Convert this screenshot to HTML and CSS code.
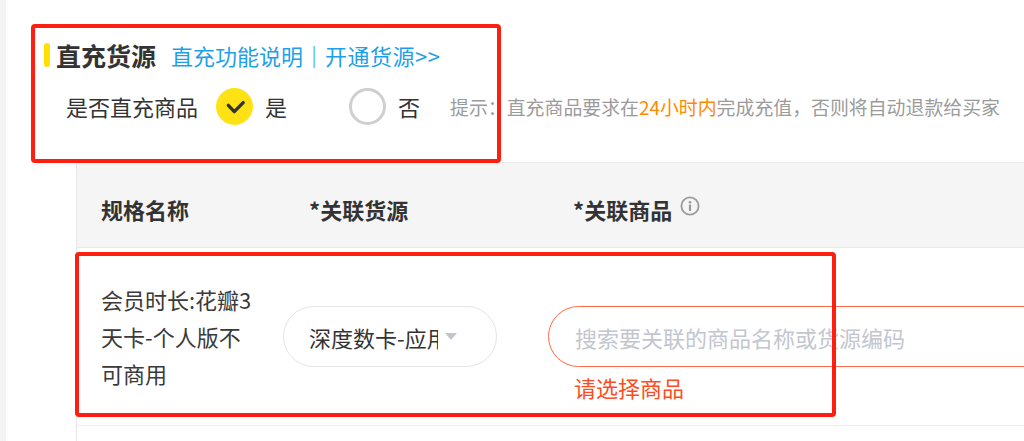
FILE: index.html
```html
<!DOCTYPE html>
<html lang="zh-CN">
<head>
<meta charset="utf-8">
<title>直充货源</title>
<link rel="stylesheet" href="styles.css">
</head>
<body>
<div class="page">
  <aside class="side"></aside>
  <main class="main">
    <div class="section-title">
      <span class="bar"></span>
      <h2 class="title">直充货源</h2>
      <a class="link">直充功能说明</a><span class="sep">｜</span><a class="link">开通货源&gt;&gt;</a>
    </div>
    <div class="form-row">
      <span class="label">是否直充商品</span>
      <label class="radio radio-yes">
        <svg class="radio-icon" viewBox="0 0 37 37" width="37" height="37">
          <circle cx="18.5" cy="18.5" r="18.5" fill="#ffe213"/>
          <path d="M12.3 17.4 L18.3 23.6 L27.2 14.6" fill="none" stroke="#333" stroke-width="3.4" stroke-linecap="round" stroke-linejoin="round"/>
        </svg>
        <span>是</span>
      </label>
      <label class="radio radio-no">
        <span class="radio-empty"></span>
        <span>否</span>
      </label>
      <span class="hint">提示：直充商品要求在<em>24小时内</em>完成充值，否则将自动退款给买家</span>
    </div>
    <div class="table">
      <div class="thead">
        <div class="th c1">规格名称</div>
        <div class="th c2">*关联货源</div>
        <div class="th c3">*关联商品
          <svg class="info" viewBox="0 0 20 20" width="20" height="20">
            <circle cx="10" cy="10" r="8.6" fill="none" stroke="#9a9a9a" stroke-width="1.8"/>
            <circle cx="10" cy="6.2" r="1.3" fill="#9a9a9a"/>
            <rect x="8.9" y="8.6" width="2.2" height="6.4" rx="0.6" fill="#9a9a9a"/>
          </svg>
        </div>
      </div>
      <div class="tr">
        <div class="td c1"><span class="spec">会员时长:花瓣3天卡-个人版不可商用</span></div>
        <div class="td c2">
          <div class="select">
            <span class="select-text">深度数卡-应用</span>
            <span class="caret"></span>
          </div>
        </div>
        <div class="td c3">
          <div class="field">
            <input class="search" type="text" placeholder="搜索要关联的商品名称或货源编码">
            <span class="error">请选择商品</span>
          </div>
        </div>
      </div>
      <div class="tail"></div>
    </div>
  </main>
  <div class="mark mark-1"></div>
  <div class="mark mark-2"></div>
</div>
</body>
</html>
```

FILE: styles.css
```css
* { box-sizing: border-box; }
html, body {
  margin: 0;
  padding: 0;
  background: #fff;
  overflow: hidden;
}
body {
  font-family: "Noto Sans CJK SC", "Noto Sans", sans-serif;
  color: #333;
  width: 1024px;
  height: 441px;
}
.page {
  position: relative;
  display: flex;
  width: 1024px;
  height: 441px;
  overflow: hidden;
}
.side {
  width: 6px;
  flex: none;
  background: #f4f4f5;
}
.main {
  flex: 1;
  padding: 39px 0 0 38px;
  min-width: 0;
}
.section-title {
  display: flex;
  align-items: center;
  height: 32px;
}
.bar {
  width: 6px;
  height: 24px;
  border-radius: 3px;
  background: #ffe000;
  margin-right: 6px;
}
.title {
  margin: 0 15px 0 0;
  font-size: 25px;
  font-weight: 700;
  color: #333;
  line-height: 32px;
}
.link, .sep {
  font-size: 22px;
  color: #1f9fe9;
  line-height: 32px;
  text-decoration: none;
}
.link:last-child { letter-spacing: 0.5px; }
.form-row {
  display: flex;
  align-items: center;
  height: 40px;
  margin: 15px 0 0 22px;
  white-space: nowrap;
}
.label {
  font-size: 22px;
  margin-right: 18px;
}
.radio {
  display: flex;
  align-items: center;
  font-size: 22px;
  gap: 12px;
}
.radio-yes { margin-right: 62px; }
.radio-no { margin-right: 30px; gap: 12px; }
.radio-icon { display: block; }
.radio-empty {
  width: 37px;
  height: 37px;
  border-radius: 50%;
  border: 3px solid #cfcfcf;
  background: #fff;
}
.hint {
  font-size: 18.9px;
  color: #9b9b9b;
}
.hint em {
  font-style: normal;
  color: #ff8a00;
}
.table {
  margin: 36px 0 0 32px;
  width: 1100px;
  border-left: 1px solid #e8e8ea;
}
.thead {
  display: grid;
  grid-template-columns: 206px 265px 1fr;
  height: 86px;
  background: #f5f5f6;
  border-top: 1px solid #e9e9eb;
  border-bottom: 1px solid #e9e9ee;
}
.th {
  display: flex;
  align-items: center;
  padding-top: 8px;
  font-size: 22px;
  font-weight: 700;
  color: #333;
}
.th.c1 { padding-left: 24px; }
.th.c2 { padding-left: 26px; }
.th.c3 { padding-left: 25px; }
.info { margin-left: 8px; margin-top: -6px; }
.tr {
  display: grid;
  grid-template-columns: 206px 265px 1fr;
  height: 178px;
  border-bottom: 1px solid #ebedf3;
  align-items: center;
}
.td.c1 { padding-left: 24px; }
.spec {
  display: block;
  width: 155px;
  font-size: 22px;
  line-height: 37px;
  color: #3a3a3a;
}
.select {
  display: flex;
  align-items: center;
  width: 214px;
  height: 61px;
  border: 1px solid #e4e4e6;
  border-radius: 31px;
  padding-left: 25px;
}
.select-text {
  width: 129px;
  overflow: hidden;
  white-space: nowrap;
  font-size: 22px;
  color: #333;
}
.caret {
  margin-left: 7px;
  width: 0;
  height: 0;
  border-left: 6.5px solid transparent;
  border-right: 6.5px solid transparent;
  border-top: 7px solid #c0c4cc;
}
.field {
  position: relative;
}
.search {
  display: block;
  width: 560px;
  height: 61px;
  border: 1px solid #ff6a48;
  border-radius: 31px;
  padding: 0 0 0 26px;
  font-family: inherit;
  font-size: 22px;
  color: #333;
  background: #fff;
  outline: none;
}
.search::placeholder {
  color: #c3c6cf;
}
.error {
  position: absolute;
  left: 26px;
  top: 100%;
  margin-top: 8px;
  font-size: 22px;
  line-height: 24px;
  color: #ff4b22;
  white-space: nowrap;
}
.tail {
  height: 40px;
}
.mark {
  position: absolute;
  border: 4px solid #fe1f12;
  border-radius: 4px;
  pointer-events: none;
}
.mark-1 {
  left: 31px;
  top: 24px;
  width: 470px;
  height: 139px;
}
.mark-2 {
  left: 75px;
  top: 252px;
  width: 761px;
  height: 165px;
}
```
